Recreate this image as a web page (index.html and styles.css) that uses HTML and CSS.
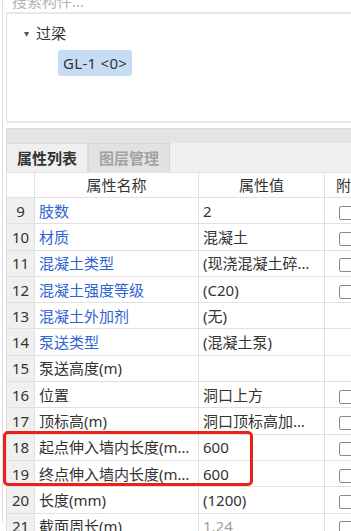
FILE: index.html
```html
<!DOCTYPE html>
<html lang="zh">
<head>
    <meta charset="UTF-8">
    <title>构件属性</title>
    <link rel="stylesheet" href="styles.css">
</head>
<body>
    <div class="panel">
        <div class="search">搜索构件...</div>

        <div class="tree">
            <div class="tree-node"><span class="caret">&#9662;</span>过梁</div>
            <div class="tree-leaf"><span class="leaf-label">GL-1 &lt;0&gt;</span></div>
        </div>

        <div class="bar"></div>

        <div class="tabs">
            <div class="tab active">属性列表</div>
            <div class="tab">图层管理</div>
        </div>

        <table class="props">
            <colgroup>
                <col class="c-num">
                <col class="c-name">
                <col class="c-val">
                <col class="c-ext">
            </colgroup>
            <tr class="head">
                <th></th>
                <th>属性名称</th>
                <th>属性值</th>
                <th class="ext">附加</th>
            </tr>
            <tr><td class="num">9</td><td class="name link">肢数</td><td class="val">2</td><td class="ext"><span class="box"></span></td></tr>
            <tr><td class="num">10</td><td class="name link">材质</td><td class="val">混凝土</td><td class="ext"><span class="box"></span></td></tr>
            <tr><td class="num">11</td><td class="name link">混凝土类型</td><td class="val">(现浇混凝土碎石混凝土)</td><td class="ext"><span class="box"></span></td></tr>
            <tr><td class="num">12</td><td class="name link">混凝土强度等级</td><td class="val">(C20)</td><td class="ext"><span class="box"></span></td></tr>
            <tr><td class="num">13</td><td class="name link">混凝土外加剂</td><td class="val">(无)</td><td class="ext"></td></tr>
            <tr><td class="num">14</td><td class="name link">泵送类型</td><td class="val">(混凝土泵)</td><td class="ext"></td></tr>
            <tr><td class="num">15</td><td class="name">泵送高度(m)</td><td class="val"></td><td class="ext"></td></tr>
            <tr><td class="num">16</td><td class="name">位置</td><td class="val">洞口上方</td><td class="ext"><span class="box"></span></td></tr>
            <tr><td class="num">17</td><td class="name">顶标高(m)</td><td class="val">洞口顶标高加过梁高度</td><td class="ext"><span class="box"></span></td></tr>
            <tr><td class="num">18</td><td class="name">起点伸入墙内长度(mm)</td><td class="val">600</td><td class="ext"><span class="box"></span></td></tr>
            <tr><td class="num">19</td><td class="name">终点伸入墙内长度(mm)</td><td class="val">600</td><td class="ext"><span class="box"></span></td></tr>
            <tr><td class="num">20</td><td class="name">长度(mm)</td><td class="val">(1200)</td><td class="ext"><span class="box"></span></td></tr>
            <tr><td class="num">21</td><td class="name">截面周长(m)</td><td class="val muted">1.24</td><td class="ext"><span class="box"></span></td></tr>
        </table>
    </div>

    <div class="highlight"></div>
</body>
</html>
```

FILE: styles.css
```css
* {
    margin: 0;
    padding: 0;
    box-sizing: border-box;
}

body {
    position: relative;
    width: 351px;
    height: 531px;
    overflow: hidden;
    background: #fff;
    font-family: "Noto Sans", "Noto Sans CJK SC", sans-serif;
    font-size: 15px;
    color: #333;
}

.panel {
    margin-left: 2px;
    padding-left: 3px;
    border-left: 1px solid #dedede;
    height: 531px;
    width: 420px;
}

/* 搜索框 */
.search {
    margin-top: -9px;
    height: 23px;
    line-height: 20px;
    padding-left: 6px;
    color: #b4b4b4;
    border-bottom: 2px solid #e8e8e8;
}

/* 构件树 */
.tree {
    height: 109px;
    border-left: 1px solid #e2e2e2;
    border-bottom: 2px solid #e6e6e6;
    padding-top: 10px;
}

.tree-node {
    display: flex;
    align-items: center;
    height: 17px;
    padding-left: 17px;
}

.caret {
    font-size: 10px;
    color: #555;
    width: 12px;
}

.tree-leaf {
    padding-left: 51px;
    margin-top: 9px;
}

.leaf-label {
    display: inline-block;
    height: 26px;
    line-height: 26px;
    padding: 0 5px 0 5px;
    background: #c6dcf4;
    border-radius: 3px;
    letter-spacing: 0.3px;
}

.bar {
    margin-top: 5px;
    height: 15px;
    background: #e4e4e4;
    border-top: 1px solid #dadada;
}

.tabs {
    display: flex;
    height: 29px;
    background: #f0f0f0;
}

.tab {
    width: 82px;
    text-align: center;
    line-height: 28px;
    font-weight: bold;
    color: #a3a3a3;
    background: #e2e2e2;
    border: 1px solid #d6d6d6;
    border-bottom: none;
}

.tab.active {
    color: #333;
    background: #efefef;
    border-color: #dcdcdc;
}

/* 属性表 */
.props {
    table-layout: fixed;
    border-collapse: collapse;
    width: 371px;
}

.c-num { width: 28px; }
.c-name { width: 164px; }
.c-val { width: 126px; }
.c-ext { width: 53px; }

.props th,
.props td {
    height: 26.3px;
    border: 1px solid #e0e0e0;
    white-space: nowrap;
    overflow: hidden;
    text-overflow: ellipsis;
    font-weight: normal;
    line-height: 20px;
}

.props th {
    height: 25px;
    text-align: center;
}

.props td.num {
    text-align: center;
    background: #f0f0f0;
}

.props td.name {
    padding-left: 4px;
    padding-right: 2px;
}

.props td.val {
    padding-left: 4px;
    padding-right: 8px;
}

.props td.link {
    color: #2f64d2;
}

.props td.muted {
    color: #a0a0a0;
}

.props th.ext {
    text-align: left;
    padding-left: 11px;
    text-overflow: clip;
}

.props td.ext {
    padding-left: 14px;
    text-overflow: clip;
}

.box {
    display: inline-block;
    width: 14px;
    height: 14px;
    vertical-align: middle;
    border: 1px solid #8a8a8a;
    border-radius: 2px;
    background: #fff;
}

/* 红色标注框 */
.highlight {
    position: absolute;
    left: 3px;
    top: 431px;
    width: 250px;
    height: 55px;
    border: 3px solid #ec2017;
    border-radius: 5px;
}
```
